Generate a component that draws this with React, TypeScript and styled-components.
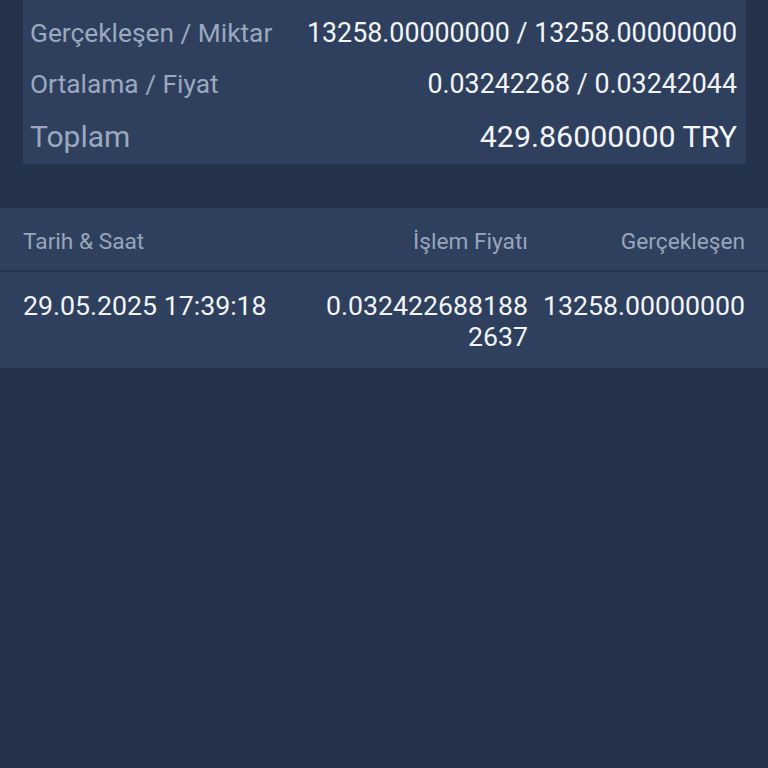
import React from "react";
import styled, { createGlobalStyle } from "styled-components";

const Global = createGlobalStyle`
  html, body {
    margin: 0;
    padding: 0;
    background: #25324b;
  }
  body {
    font-family: Roboto, "Noto Sans", "Liberation Sans", sans-serif;
    -webkit-font-smoothing: antialiased;
  }
`;

const Page = styled.div`
  width: 768px;
  height: 768px;
  background: #25324b;
  overflow: hidden;
  display: flex;
  flex-direction: column;
`;

const SummaryCard = styled.div`
  margin: 0 22px 0 23px;
  padding: 7px 9px 0 7px;
  background: #2e405e;
  display: flex;
  flex-direction: column;
`;

const SummaryRow = styled.div<{ $big?: boolean }>`
  display: flex;
  justify-content: space-between;
  align-items: center;
  height: ${(p) => (p.$big ? 55 : 51)}px;
`;

const Label = styled.span<{ $big?: boolean }>`
  color: #9ba8bf;
  font-size: ${(p) => (p.$big ? 30 : 26.3)}px;
`;

const Value = styled.span<{ $big?: boolean }>`
  color: #f2f4f7;
  text-align: right;
  font-size: ${(p) => (p.$big ? 30.4 : 26.8)}px;
`;

const Table = styled.div`
  margin-top: 44px;
  background: #2e405e;
`;

const Grid = styled.div`
  display: grid;
  grid-template-columns: 1fr 210px 210px;
  column-gap: 7px;
  padding: 0 23px;
`;

const HeaderRow = styled(Grid)`
  height: 64px;
  padding-top: 4px;
  box-sizing: border-box;
  align-items: center;
  border-bottom: 2px solid #263450;
  font-size: 22.7px;
  color: #98a5bb;
`;

const DataRow = styled(Grid)`
  padding-top: 19px;
  padding-bottom: 15px;
  font-size: 26.7px;
  line-height: 31px;
  color: #f2f4f7;
`;

const Cell = styled.div<{ $right?: boolean }>`
  text-align: ${(p) => (p.$right ? "right" : "left")};
  word-break: break-all;
`;

export default function App() {
  return (
    <>
      <Global />
      <Page>
        <SummaryCard>
          <SummaryRow>
            <Label>Gerçekleşen / Miktar</Label>
            <Value>13258.00000000 / 13258.00000000</Value>
          </SummaryRow>
          <SummaryRow>
            <Label>Ortalama / Fiyat</Label>
            <Value>0.03242268 / 0.03242044</Value>
          </SummaryRow>
          <SummaryRow $big>
            <Label $big>Toplam</Label>
            <Value $big>429.86000000 TRY</Value>
          </SummaryRow>
        </SummaryCard>
        <Table>
          <HeaderRow>
            <Cell>Tarih &amp; Saat</Cell>
            <Cell $right>İşlem Fiyatı</Cell>
            <Cell $right>Gerçekleşen</Cell>
          </HeaderRow>
          <DataRow>
            <Cell>29.05.2025 17:39:18</Cell>
            <Cell $right>0.0324226881882637</Cell>
            <Cell $right>13258.00000000</Cell>
          </DataRow>
        </Table>
      </Page>
    </>
  );
}
